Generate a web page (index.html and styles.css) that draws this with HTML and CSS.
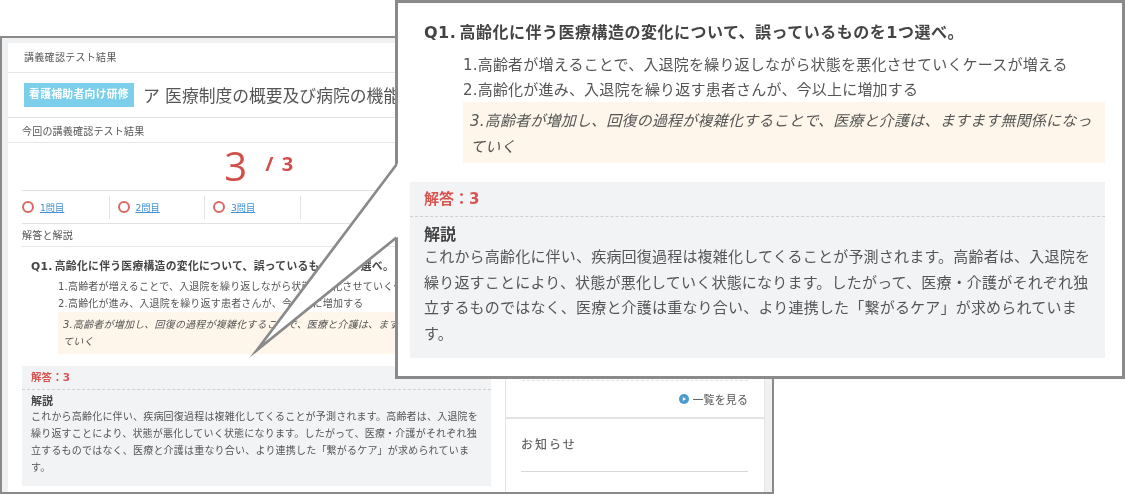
FILE: index.html
```html
<!DOCTYPE html>
<html lang="ja">
<head>
<meta charset="utf-8">
<title>講義確認テスト結果</title>
<link rel="stylesheet" href="styles.css">
</head>
<body>
<div class="stage">
  <div class="window">
    <main class="main">
      <div class="crumb">講義確認テスト結果</div>
      <div class="heading"><span class="badge">看護補助者向け研修</span><h1>ア 医療制度の概要及び病院の機能</h1></div>
      <div class="section-label">今回の講義確認テスト結果</div>
      <div class="inset">
        <div class="score"><span class="score-num">3</span><span class="score-total">/ 3</span></div>
        <div class="tabs">
          <div class="tab"><span class="ring"></span><a href="#">1問目</a></div>
          <div class="tab"><span class="ring"></span><a href="#">2問目</a></div>
          <div class="tab"><span class="ring"></span><a href="#">3問目</a></div>
        </div>
        <div class="answers-label">解答と解説</div>
        <div class="q-small">
          <p class="q-title">Q1. 高齢化に伴う医療構造の変化について、誤っているものを1つ選べ。</p>
          <p class="q-opt">1.高齢者が増えることで、入退院を繰り返しながら状態を悪化させていくケースが増える</p>
          <p class="q-opt">2.高齢化が進み、入退院を繰り返す患者さんが、今以上に増加する</p>
          <p class="q-opt correct">3.高齢者が増加し、回復の過程が複雑化することで、医療と介護は、ますます無関係になっていく</p>
        </div>
        <div class="box">
          <div class="box-answer">解答：3</div>
          <div class="box-body">
            <div class="box-title">解説</div>
            <p class="box-text">これから高齢化に伴い、疾病回復過程は複雑化してくることが予測されます。高齢者は、入退院を繰り返すことにより、状態が悪化していく状態になります。したがって、医療・介護がそれぞれ独立するものではなく、医療と介護は重なり合い、より連携した「繋がるケア」が求められています。</p>
          </div>
        </div>
      </div>
    </main>
    <aside class="side">
      <div class="side-top">
        <div class="side-more"><svg class="play" viewBox="0 0 10 10"><circle cx="5" cy="5" r="5" fill="#4b9ad0"/><path d="M3.8 3l3.2 2-3.2 2z" fill="#fff"/></svg><span>一覧を見る</span></div>
      </div>
      <div class="side-news"><div class="news-title">お知らせ</div></div>
    </aside>
  </div>

  <section class="callout">
    <p class="c-title">Q1. 高齢化に伴う医療構造の変化について、誤っているものを1つ選べ。</p>
    <div class="c-opts">
      <p class="c-opt">1.高齢者が増えることで、入退院を繰り返しながら状態を悪化させていくケースが増える</p>
      <p class="c-opt">2.高齢化が進み、入退院を繰り返す患者さんが、今以上に増加する</p>
      <p class="c-opt c-correct">3.高齢者が増加し、回復の過程が複雑化することで、医療と介護は、ますます無関係になっていく</p>
    </div>
    <div class="c-box">
      <div class="c-answer">解答：3</div>
      <div class="c-body">
        <div class="c-head">解説</div>
        <p class="c-text">これから高齢化に伴い、疾病回復過程は複雑化してくることが予測されます。高齢者は、入退院を繰り返すことにより、状態が悪化していく状態になります。したがって、医療・介護がそれぞれ独立するものではなく、医療と介護は重なり合い、より連携した「繋がるケア」が求められています。</p>
      </div>
    </div>
  </section>

  <svg class="pointer" viewBox="0 0 1125 495">
    <polygon points="399,162 257,350 399,236" fill="#fff"/>
    <polyline points="396.5,164.5 257,350 396.5,237.5" fill="none" stroke="#8a8a8a" stroke-width="2.7" stroke-miterlimit="20"/>
  </svg>
</div>
</body>
</html>
```
FILE: styles.css
```css
* { box-sizing: border-box; }
html, body { margin: 0; padding: 0; background: #fff; }
body {
  font-family: "DejaVu Sans", "Noto Sans CJK JP", sans-serif;
  color: #555;
  overflow: hidden;
}
p, h1 { margin: 0; font-weight: normal; }
.stage { position: relative; width: 1125px; height: 495px; overflow: hidden; padding-top: 36px; }

/* background window */
.window {
  width: 774px;
  height: 458px;
  border: 2px solid #8a8a8a;
  background: #eff0f2;
  padding: 5px 8px 0 6px;
  display: grid;
  grid-template-columns: 497px 260px;
  filter: blur(0.45px);
}
.main { background: #fff; min-width: 0; }
.crumb {
  height: 30px;
  padding: 0 16px;
  font-size: 10px;
  letter-spacing: .3px;
  line-height: 30px;
  border-bottom: 1px solid #e6e6e6;
}
.heading {
  height: 45px;
  padding: 0 16px;
  display: flex;
  align-items: center;
  gap: 9px;
  border-bottom: 1px solid #e2e2e2;
  white-space: nowrap;
}
.badge {
  width: 110px;
  height: 24px;
  background: #7ccfea;
  color: #fff;
  font-size: 10.8px;
  font-weight: 700;
  line-height: 24px;
  text-align: center;
  letter-spacing: .3px;
}
h1 { font-size: 16.8px; color: #555; }
.section-label {
  height: 25px;
  padding: 0 14px;
  font-size: 10px;
  letter-spacing: .2px;
  line-height: 27px;
  border-bottom: 1px solid #e6e6e6;
}
.inset { padding: 0 14px; }
.score {
  height: 48px;
  border-bottom: 1px solid #e2e2e2;
  display: flex;
  justify-content: center;
  align-items: center;
  gap: 18px;
  padding-left: 6px;
  color: #d2504c;
}
.score-num { font-family: "Open Sans", sans-serif; font-size: 40px; line-height: 48px; margin-top: -2px; }
.score-total { font-family: "Open Sans", sans-serif; font-size: 20px; font-weight: 700; letter-spacing: 1.5px; margin-top: -6px; }
.tabs {
  height: 33px;
  border-bottom: 1px solid #e2e2e2;
  display: flex;
  align-items: center;
}
.tab {
  width: 95.5px;
  height: 23px;
  display: flex;
  align-items: center;
  gap: 6px;
  border-right: 1px solid #e4e4e4;
}
.tab:first-child { width: 87.5px; }
.tab + .tab { padding-left: 8px; }
.ring { width: 12px; height: 12px; border: 2px solid #d96a66; border-radius: 50%; }
.tab a { font-size: 9.2px; color: #3f8fd2; text-decoration: underline; }
.answers-label {
  height: 23px;
  font-size: 10px;
  letter-spacing: .2px;
  line-height: 23px;
  border-bottom: 1px solid #e6e6e6;
}
.q-small { padding: 11px 0 12px 9px; }
.q-title { font-size: 10.8px; font-weight: 700; letter-spacing: .3px; word-spacing: -2px; line-height: 17px; white-space: nowrap; color: #444; }
.q-opt { font-size: 10px; letter-spacing: .2px; line-height: 16.5px; margin-left: 27px; white-space: nowrap; }
.q-title + .q-opt { margin-top: 4px; }
.q-opt.correct {
  white-space: normal;
  background: #fef6ea;
  font-style: italic;
  line-height: 17px;
  padding: 4px 5px;
  margin-top: 0;
  width: 433px;
}
.box { background: #f2f3f5; height: 120px; }
.box-answer {
  height: 24px;
  padding: 0 9px;
  color: #d9534f;
  font-size: 10.4px;
  font-weight: 700;
  line-height: 23px;
  letter-spacing: .2px;
  border-bottom: 1px dashed #d0d0d0;
}
.box-body { padding: 5px 9px; }
.box-title { font-size: 11px; font-weight: 700; color: #444; line-height: 13px; }
.box-text { font-size: 10px; letter-spacing: .2px; line-height: 17px; }

.side {
  border-left: 1px solid #e4e4e4;
  border-right: 1px solid #e4e4e4;
  background: #fff;
  display: flex;
  flex-direction: column;
}
.side-top { height: 374px; padding-top: 337px; }
.side-more {
  margin: 0 16px;
  border-top: 1px dashed #e2e2e2;
  display: flex;
  justify-content: flex-end;
  align-items: center;
  gap: 4px;
  height: 37px;
  font-size: 11px;
  letter-spacing: .1px;
}
.play { width: 10px; height: 10px; }
.side-news { border-top: 2px solid #e4e4e4; padding: 0 16px; }
.news-title {
  height: 53px;
  font-size: 12px;
  font-weight: 500;
  color: #666;
  letter-spacing: 2px;
  line-height: 52px;
  margin-left: -1px;
  border-bottom: 1px solid #d8d8d8;
}

/* magnified callout */
.callout {
  position: absolute;
  left: 395px;
  top: 0;
  width: 730px;
  height: 379px;
  background: #fff;
  border: 3px solid #8a8a8a;
  padding: 0 17px 0 12px;
  filter: blur(0.2px);
}
.c-title { font-size: 16px; font-weight: 700; letter-spacing: .5px; word-spacing: -3px; line-height: 22px; padding: 19px 0 0 14px; color: #444; white-space: nowrap; }
.c-opts { padding: 9px 0 0 53px; }
.c-opt { font-size: 15px; letter-spacing: .2px; line-height: 25px; }
.c-correct {
  background: #fef6ea;
  font-style: italic;
  line-height: 25.5px;
  padding: 7px 7px 3px;
  margin-top: -1px;
}
.c-box { margin-top: 19px; background: #f2f3f5; height: 176px; }
.c-answer {
  height: 35px;
  padding: 0 14px;
  color: #d9534f;
  font-size: 15px;
  font-weight: 700;
  line-height: 34px;
  border-bottom: 1px dashed #d0d0d0;
}
.c-body { padding: 8px 14px; }
.c-head { font-size: 16px; font-weight: 700; color: #444; line-height: 20px; }
.c-text { font-size: 15px; letter-spacing: .2px; line-height: 25.7px; }

.pointer { position: absolute; left: 0; top: 0; width: 1125px; height: 495px; pointer-events: none; }
```
